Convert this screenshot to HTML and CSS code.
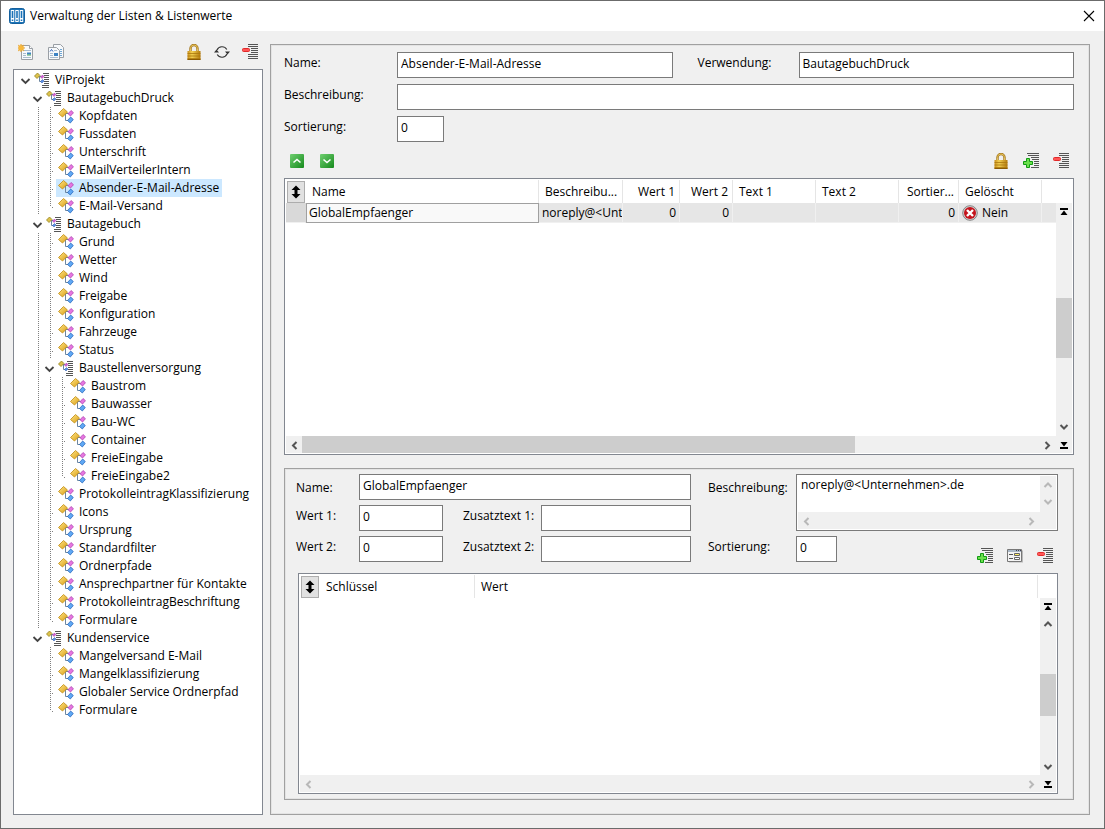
FILE: index.html
```html
<!DOCTYPE html>
<html lang="de">
<head>
<meta charset="utf-8">
<title>Verwaltung der Listen &amp; Listenwerte</title>
<link rel="stylesheet" href="styles.css">
</head>
<body>
<svg class="sprite" aria-hidden="true">
  <defs>
    <linearGradient id="gold" x1="0" y1="0" x2="1" y2="1"><stop offset="0" stop-color="#ffe78a"/><stop offset="1" stop-color="#d99c10"/></linearGradient>
    <linearGradient id="green" x1="0" y1="0" x2="1" y2="1"><stop offset="0" stop-color="#6fd070"/><stop offset="1" stop-color="#168a1c"/></linearGradient>
    <linearGradient id="brass" x1="0" y1="0" x2="1" y2="0"><stop offset="0" stop-color="#c98f1a"/><stop offset=".35" stop-color="#f2cf52"/><stop offset="1" stop-color="#b47a0c"/></linearGradient>
  </defs>
  <symbol id="leaf" viewBox="0 0 16 16">
    <path d="M7 5.500H11M7.500 5.500V12.500H10" fill="none" stroke="#6d86a0"/>
    <path d="M5.500 .5L9.500 4L4.500 9L.5 5.500Z" fill="url(#gold)" stroke="#c08a10" stroke-width=".8"/>
    <path d="M13 2.500L15.500 4.700L12.500 8L10 5.700Z" fill="#e676e0" stroke="#a838ac" stroke-width=".7"/>
    <path d="M12.700 9L15.300 11.500L12.300 15L9.500 12.500Z" fill="#5fa8f4" stroke="#1d5fb8" stroke-width=".7"/>
  </symbol>
  <symbol id="folder" viewBox="0 0 16 16">
    <path d="M9 1.500h6M10 3.500h5M10 5.500h5M10 7.500h5M10 9.500h5M10 11.500h5M8 13.500h7M8 15.500h7" stroke="#555"/>
    <path d="M4 4.500H7M5.500 5V9.500H7" fill="none" stroke="#6d86a0"/>
    <path d="M3.500 1L6 3.500L3 6.500L.5 4Z" fill="#dcc24a" stroke="#94821f" stroke-width=".8"/>
    <path d="M8.500 3L10 4.500L8 6.500L6.500 5Z" fill="#d65fd6" stroke="#993a9c" stroke-width=".5"/>
    <path d="M8.500 7.500L10 9L8 11L6.500 9.500Z" fill="#5a8fe4" stroke="#2b55a8" stroke-width=".5"/>
  </symbol>
  <symbol id="lock" viewBox="0 0 16 16">
    <path d="M4.500 8V4.500a3.500 3.500 0 0 1 7 0V8" fill="none" stroke="#a5771c" stroke-width="2.400"/>
    <path d="M4.500 8V4.500a3.500 3.500 0 0 1 7 0V8" fill="none" stroke="#e4c35c"/>
    <path d="M1.500 7h13v9h-13z" fill="url(#brass)"/>
    <path d="M1.500 9.500h13M1.500 12h13M1.500 14.500h13" stroke="#a9760d" stroke-width=".8"/>
    <path d="M1.500 15.500h13" stroke="#8a5a04"/>
  </symbol>
  <symbol id="minus" viewBox="0 0 16 16">
    <path d="M6 .5h10M6 2.500h10M8 4.500h8M8 6.500h8M8 8.500h8M6 10.500h10M6 12.500h10M6 14.500h10" stroke="#555" />
    <rect x="0" y="3" width="9" height="6" fill="#f0f0f0"/>
    <rect x=".5" y="4.500" width="7" height="3" rx="1" fill="#ff5555" stroke="#e02a2a"/>
  </symbol>
  <symbol id="plus" viewBox="0 0 16 16">
    <path d="M4 .5h12M5 2.500h11M8 4.500h8M9 6.500h7M11 8.500h5M11 10.500h5M11 12.500h5M8 14.500h8" stroke="#555"/>
    <path d="M3.500 5.500h3v3h3v3h-3v3h-3v-3h-3v-3h3z" fill="#6be04c" stroke="#119a12" stroke-linejoin="round"/>
  </symbol>
  <symbol id="refresh" viewBox="0 0 16 16">
    <path d="M3 6A5.500 5.500 0 0 1 12.800 5.500M13 10A5.500 5.500 0 0 1 3.200 10.500" fill="none" stroke="#333" stroke-width="1.100"/>
    <path d="M0 8.500L2.500 5.500L5 8.500ZM16 7.500L13.500 10.500L11 7.500Z" fill="#333"/>
  </symbol>
  <symbol id="newdoc" viewBox="0 0 16 16">
    <path d="M3.500 1.500h8l3 3v11h-11z" fill="#f7f9fb" stroke="#9a9fa5"/>
    <path d="M11.500 1.500v3h3" fill="#fff" stroke="#9a9fa5"/>
    <path d="M5 6.500h8M5 9.500h3M5 11.500h3M5 13.500h8" stroke="#a9bccd"/>
    <path d="M9 8.500h4v2H9z" fill="#3b82c4"/>
    <path d="M9 10.500h4v1H9z" fill="#45a35a"/>
    <path d="M3 0l1 2 2-1-1 2 2 1-2 .7L6 7 4 6 3 8 2 6 0 7l1-2-1-1 1-1-1-2 2 1z" fill="#f8b93c" stroke="#e59a1c" stroke-width=".4"/>
  </symbol>
  <symbol id="copydoc" viewBox="0 0 16 16">
    <path d="M5.500.5h7l3 3v10h-10z" fill="#f7f9fb" stroke="#9a9fa5"/>
    <path d="M12 5.500h2M12 7.500h2M12 9.500h2M12 11.500h2" stroke="#6fa6d4"/>
    <path d="M.5 3.500h8l3 3v9H.5z" fill="#f7f9fb" stroke="#9a9fa5"/>
    <path d="M2 9.500h3M2 11.500h3M2 13.500h8M6 6.500h3" stroke="#a9bccd"/>
    <path d="M6 9h4v3H6z" fill="#3b82c4"/>
    <path d="M2 7.500l1.500-2L5 7.500" fill="none" stroke="#3366bb"/>
  </symbol>
  <symbol id="form" viewBox="0 0 16 16">
    <path d="M2 2.500h14v12H2z" fill="#b9b9b9"/>
    <path d="M.5 1.500h14v12H.5z" fill="#f4f4f4" stroke="#777"/>
    <path d="M1 2h13v2H1z" fill="#a9b7c6"/>
    <path d="M9 2.500h1M11 2.500h1M13 2.500h1" stroke="#445"/>
    <path d="M2 6.500h4M2 10.500h4" stroke="#555"/>
    <path d="M7.500 5.500h5v2h-5z" fill="#ffee66" stroke="#666"/>
    <path d="M7.500 9.500h5v2h-5z" fill="#fff" stroke="#666"/>
  </symbol>
  <symbol id="up" viewBox="0 0 16 16">
    <rect x="1" y="1" width="14" height="14" rx="1" fill="url(#green)"/>
    <path d="M4.500 9.500L8 6.500L11.500 9.500" fill="none" stroke="#fff" stroke-width="1.600"/>
  </symbol>
  <symbol id="down" viewBox="0 0 16 16">
    <rect x="1" y="1" width="14" height="14" rx="1" fill="url(#green)"/>
    <path d="M4.500 6.500L8 9.500L11.500 6.500" fill="none" stroke="#fff" stroke-width="1.600"/>
  </symbol>
  <symbol id="cross" viewBox="0 0 16 16">
    <circle cx="8" cy="8" r="7.300" fill="#d4d4d4" stroke="#858585"/>
    <circle cx="8" cy="8" r="6" fill="#c4141c"/>
    <path d="M5 5L11 11M11 5L5 11" stroke="#fff" stroke-width="2.400"/>
  </symbol>
  <symbol id="sort" viewBox="0 0 16 16">
    <path d="M8 1.500L12.500 6H9.500V10H12.500L8 14.500L3.500 10H6.500V6H3.500Z" fill="#000"/>
  </symbol>
  <symbol id="first" viewBox="0 0 16 16"><path d="M4 4h8v2H4zM8 6.500L11.500 11h-7z" fill="#000"/></symbol>
  <symbol id="last" viewBox="0 0 16 16"><path d="M4 10h8v2H4zM8 9.500L4.500 5h7z" fill="#000"/></symbol>
  <symbol id="c-up" viewBox="0 0 16 16"><path d="M4.500 10L8 6.500L11.500 10" fill="none" stroke="currentColor" stroke-width="2"/></symbol>
  <symbol id="c-down" viewBox="0 0 16 16"><path d="M4.500 6L8 9.500L11.500 6" fill="none" stroke="currentColor" stroke-width="2"/></symbol>
  <symbol id="c-left" viewBox="0 0 16 16"><path d="M10.500 5L7 8.500L10.500 12" fill="none" stroke="currentColor" stroke-width="2"/></symbol>
  <symbol id="c-right" viewBox="0 0 16 16"><path d="M5.500 5L9 8.500L5.500 12" fill="none" stroke="currentColor" stroke-width="2"/></symbol>
  <symbol id="open" viewBox="0 0 13 16"><path d="M2.500 7L6.500 11L10.500 7" fill="none" stroke="currentColor" stroke-width="1.800"/></symbol>
</svg>

<div class="window">
  <header class="titlebar">
    <svg class="icon" viewBox="0 0 16 16" aria-hidden="true"><rect x=".5" y=".5" width="15" height="15" rx="2" fill="#1c74b8" stroke="#14609e"/><path d="M3.500 2v12M8 2v12M12.500 2v12" stroke="#fff" stroke-width="3.400"/><path d="M3.500 3v7M8 3v7M12.500 3v7" stroke="#1c74b8" stroke-width="1.600"/><path d="M3.500 11.500v1.500M8 11.500v1.500M12.500 11.500v1.500" stroke="#1c74b8" stroke-width="1.600"/></svg>
    <h1>Verwaltung der Listen &amp; Listenwerte</h1>
    <button class="close" aria-label="Schließen"><svg viewBox="0 0 12 12"><path d="M1 1L11 11M11 1L1 11" stroke="#000" stroke-width="1.100"/></svg></button>
  </header>

  <main class="content">
    <section class="sidebar">
      <div class="toolbar">
        <button class="tool" aria-label="Neu"><svg><use href="#newdoc"/></svg></button>
        <button class="tool" aria-label="Kopieren"><svg><use href="#copydoc"/></svg></button>
        <div class="tools-end tight">
          <button class="tool" aria-label="Sperren"><svg><use href="#lock"/></svg></button>
          <button class="tool" aria-label="Aktualisieren"><svg><use href="#refresh"/></svg></button>
          <button class="tool" aria-label="Löschen"><svg><use href="#minus"/></svg></button>
        </div>
      </div>
      <nav class="tree">
        <ul>
          <li>
            <div class="branch"><button class="toggle" aria-label="Zuklappen"><svg><use href="#open"/></svg></button><button class="node"><svg><use href="#folder"/></svg>ViProjekt</button></div>
            <ul>
              <li>
                <div class="branch"><button class="toggle" aria-label="Zuklappen"><svg><use href="#open"/></svg></button><button class="node"><svg><use href="#folder"/></svg>BautagebuchDruck</button></div>
                <ul>
                  <li class="leaf"><button class="node"><svg><use href="#leaf"/></svg>Kopfdaten</button></li>
                  <li class="leaf"><button class="node"><svg><use href="#leaf"/></svg>Fussdaten</button></li>
                  <li class="leaf"><button class="node"><svg><use href="#leaf"/></svg>Unterschrift</button></li>
                  <li class="leaf"><button class="node"><svg><use href="#leaf"/></svg>EMailVerteilerIntern</button></li>
                  <li class="leaf"><button class="node selected"><svg><use href="#leaf"/></svg>Absender-E-Mail-Adresse</button></li>
                  <li class="leaf"><button class="node"><svg><use href="#leaf"/></svg>E-Mail-Versand</button></li>
                </ul>
              </li>
              <li>
                <div class="branch"><button class="toggle" aria-label="Zuklappen"><svg><use href="#open"/></svg></button><button class="node"><svg><use href="#folder"/></svg>Bautagebuch</button></div>
                <ul>
                  <li class="leaf"><button class="node"><svg><use href="#leaf"/></svg>Grund</button></li>
                  <li class="leaf"><button class="node"><svg><use href="#leaf"/></svg>Wetter</button></li>
                  <li class="leaf"><button class="node"><svg><use href="#leaf"/></svg>Wind</button></li>
                  <li class="leaf"><button class="node"><svg><use href="#leaf"/></svg>Freigabe</button></li>
                  <li class="leaf"><button class="node"><svg><use href="#leaf"/></svg>Konfiguration</button></li>
                  <li class="leaf"><button class="node"><svg><use href="#leaf"/></svg>Fahrzeuge</button></li>
                  <li class="leaf"><button class="node"><svg><use href="#leaf"/></svg>Status</button></li>
                  <li>
                    <div class="branch"><button class="toggle" aria-label="Zuklappen"><svg><use href="#open"/></svg></button><button class="node"><svg><use href="#folder"/></svg>Baustellenversorgung</button></div>
                    <ul>
                      <li class="leaf"><button class="node"><svg><use href="#leaf"/></svg>Baustrom</button></li>
                      <li class="leaf"><button class="node"><svg><use href="#leaf"/></svg>Bauwasser</button></li>
                      <li class="leaf"><button class="node"><svg><use href="#leaf"/></svg>Bau-WC</button></li>
                      <li class="leaf"><button class="node"><svg><use href="#leaf"/></svg>Container</button></li>
                      <li class="leaf"><button class="node"><svg><use href="#leaf"/></svg>FreieEingabe</button></li>
                      <li class="leaf"><button class="node"><svg><use href="#leaf"/></svg>FreieEingabe2</button></li>
                    </ul>
                  </li>
                  <li class="leaf"><button class="node"><svg><use href="#leaf"/></svg>ProtokolleintragKlassifizierung</button></li>
                  <li class="leaf"><button class="node"><svg><use href="#leaf"/></svg>Icons</button></li>
                  <li class="leaf"><button class="node"><svg><use href="#leaf"/></svg>Ursprung</button></li>
                  <li class="leaf"><button class="node"><svg><use href="#leaf"/></svg>Standardfilter</button></li>
                  <li class="leaf"><button class="node"><svg><use href="#leaf"/></svg>Ordnerpfade</button></li>
                  <li class="leaf"><button class="node"><svg><use href="#leaf"/></svg>Ansprechpartner für Kontakte</button></li>
                  <li class="leaf"><button class="node"><svg><use href="#leaf"/></svg>ProtokolleintragBeschriftung</button></li>
                  <li class="leaf"><button class="node"><svg><use href="#leaf"/></svg>Formulare</button></li>
                </ul>
              </li>
              <li>
                <div class="branch"><button class="toggle" aria-label="Zuklappen"><svg><use href="#open"/></svg></button><button class="node"><svg><use href="#folder"/></svg>Kundenservice</button></div>
                <ul>
                  <li class="leaf"><button class="node"><svg><use href="#leaf"/></svg>Mangelversand E-Mail</button></li>
                  <li class="leaf"><button class="node"><svg><use href="#leaf"/></svg>Mangelklassifizierung</button></li>
                  <li class="leaf"><button class="node"><svg><use href="#leaf"/></svg>Globaler Service Ordnerpfad</button></li>
                  <li class="leaf"><button class="node"><svg><use href="#leaf"/></svg>Formulare</button></li>
                </ul>
              </li>
            </ul>
          </li>
        </ul>
      </nav>
    </section>

    <section class="group details">
      <form class="list-form">
        <label for="l-name">Name:</label>
        <input id="l-name" value="Absender-E-Mail-Adresse">
        <label class="second" for="l-use">Verwendung:</label>
        <input id="l-use" value="BautagebuchDruck">
        <label for="l-desc">Beschreibung:</label>
        <input id="l-desc" class="wide">
        <label for="l-sort">Sortierung:</label>
        <input id="l-sort" class="short" value="0">
      </form>

      <div class="toolbar">
        <button class="tool" aria-label="Nach oben"><svg><use href="#up"/></svg></button>
        <button class="tool" aria-label="Nach unten"><svg><use href="#down"/></svg></button>
        <div class="tools-end">
          <button class="tool" aria-label="Sperren"><svg><use href="#lock"/></svg></button>
          <button class="tool" aria-label="Hinzufügen"><svg><use href="#plus"/></svg></button>
          <button class="tool" aria-label="Löschen"><svg><use href="#minus"/></svg></button>
        </div>
      </div>

      <div class="grid values">
        <table>
          <colgroup><col class="w-sort"><col class="w-name"><col class="w-desc"><col class="w-v1"><col class="w-v2"><col class="w-text"><col class="w-text"><col class="w-order"><col class="w-text"><col></colgroup>
          <thead>
            <tr><th class="corner"><button class="sort" aria-label="Sortieren"><svg><use href="#sort"/></svg></button></th><th>Name</th><th>Beschreibu...</th><th class="num">Wert 1</th><th class="num">Wert 2</th><th>Text 1</th><th>Text 2</th><th class="num">Sortier...</th><th>Gelöscht</th><th></th></tr>
          </thead>
          <tbody>
            <tr><td class="mark"></td><td class="focus">GlobalEmpfaenger</td><td>noreply@&lt;Unt</td><td class="num">0</td><td class="num">0</td><td></td><td></td><td class="num">0</td><td><span class="flag"><svg><use href="#cross"/></svg>Nein</span></td><td></td></tr>
          </tbody>
        </table>
        <div class="vbar">
          <button aria-label="Erste Zeile"><svg><use href="#first"/></svg></button>
          <i class="before"></i><i class="thumb"></i><i class="after"></i>
          <button aria-label="Abwärts"><svg><use href="#c-down"/></svg></button>
        </div>
        <div class="hbar">
          <button aria-label="Links"><svg><use href="#c-left"/></svg></button>
          <i class="thumb"></i><i class="after"></i>
          <button aria-label="Rechts"><svg><use href="#c-right"/></svg></button>
        </div>
        <button class="end" aria-label="Letzte Zeile"><svg><use href="#last"/></svg></button>
      </div>

      <section class="group value">
        <form class="value-form">
          <div class="fields-left">
            <label class="top" for="v-name">Name:</label>
            <input id="v-name" class="wide" value="GlobalEmpfaenger">
            <label for="v-w1">Wert 1:</label>
            <input id="v-w1" value="0">
            <label class="extra" for="v-z1">Zusatztext 1:</label>
            <input id="v-z1">
            <label for="v-w2">Wert 2:</label>
            <input id="v-w2" value="0">
            <label class="extra" for="v-z2">Zusatztext 2:</label>
            <input id="v-z2">
          </div>
          <div class="fields-right">
            <label class="top" for="v-desc">Beschreibung:</label>
            <div class="memo">
              <textarea id="v-desc" wrap="off">noreply@&lt;Unternehmen&gt;.de</textarea>
              <div class="vbar off"><button type="button" aria-label="Aufwärts"><svg><use href="#c-up"/></svg></button><button type="button" aria-label="Abwärts"><svg><use href="#c-down"/></svg></button></div>
              <div class="hbar off"><button type="button" aria-label="Links"><svg><use href="#c-left"/></svg></button><i class="after"></i><button type="button" aria-label="Rechts"><svg><use href="#c-right"/></svg></button></div>
              <i class="end"></i>
            </div>
            <label for="v-sort">Sortierung:</label>
            <div class="sort-line">
              <input id="v-sort" value="0">
              <div class="tools-end">
                <button type="button" class="tool" aria-label="Hinzufügen"><svg><use href="#plus"/></svg></button>
                <button type="button" class="tool" aria-label="Bearbeiten"><svg><use href="#form"/></svg></button>
                <button type="button" class="tool" aria-label="Löschen"><svg><use href="#minus"/></svg></button>
              </div>
            </div>
          </div>
        </form>
        <div class="grid keys">
          <table>
            <colgroup><col class="w-sort"><col class="w-key"><col><col class="w-rest"></colgroup>
            <thead>
              <tr><th class="corner"><button class="sort" aria-label="Sortieren"><svg><use href="#sort"/></svg></button></th><th>Schlüssel</th><th>Wert</th><th></th></tr>
            </thead>
          </table>
          <div class="vbar">
            <button aria-label="Erste Zeile"><svg><use href="#first"/></svg></button>
            <button aria-label="Aufwärts"><svg><use href="#c-up"/></svg></button>
            <i class="before"></i><i class="thumb"></i><i class="after"></i>
            <button aria-label="Abwärts"><svg><use href="#c-down"/></svg></button>
          </div>
          <div class="hbar off">
            <button aria-label="Links"><svg><use href="#c-left"/></svg></button>
            <i class="after"></i>
            <button aria-label="Rechts"><svg><use href="#c-right"/></svg></button>
          </div>
          <button class="end" aria-label="Letzte Zeile"><svg><use href="#last"/></svg></button>
        </div>
      </section>
    </section>
  </main>
</div>
</body>
</html>
```

FILE: styles.css
```css
* { box-sizing: border-box; }

body {
  margin: 0;
  font: 12px/18px "Open Sans", "Noto Sans", sans-serif;
  color: #000;
  background: #f0f0f0;
}

button, input, textarea { font: inherit; color: inherit; }
button { padding: 0; border: 0; background: none; }
svg { display: block; flex: none; width: 16px; height: 16px; }
ul { list-style: none; margin: 0; padding: 0; }
.sprite { position: absolute; width: 0; height: 0; }

.window {
  display: flex;
  flex-direction: column;
  min-height: 100vh;
  border: 1px solid #6b6b6b;
}

.titlebar {
  display: flex;
  align-items: center;
  height: 30px;
  padding: 0 8px;
  background: #fff;
}
.titlebar h1 { flex: 1; margin: 0 0 0 5px; font-size: 12px; font-weight: 400; }
.close { display: grid; place-items: center; width: 14px; height: 28px; }
.close svg { width: 12px; height: 12px; }

.content {
  flex: 1;
  display: grid;
  grid-template-columns: 250px 1fr;
  gap: 7px;
  padding: 0 14px 13px 12px;
}

.toolbar { display: flex; align-items: center; gap: 4px; height: 36px; padding-top: 2px; }
.tools-end { display: flex; gap: 4px; margin-left: auto; }
.tools-end.tight { gap: 2px; }
.tool { display: grid; place-items: center; width: 26px; height: 34px; }

/* list tree */
.sidebar { display: flex; flex-direction: column; padding-top: 2px; }
.tree {
  flex: 1;
  padding: 1px 0 0 5px;
  border: 1px solid #828790;
  background: #fff;
}
.tree ul ul { margin-left: 12px; }
.tree ul ul > li {
  background: repeating-linear-gradient(#808080 0 1px, transparent 1px 2px) 7px 0 / 1px 100% no-repeat;
}
.tree ul ul > li:last-child { background-size: 1px 10px; }
.branch, .leaf { display: flex; height: 18px; }
.leaf::before {
  content: "";
  width: 13px;
  background: linear-gradient(#808080, #808080) 9px 10px / 1px 1px no-repeat;
}
.toggle { display: grid; place-items: center; width: 13px; background: #fff; color: #444; }
.toggle svg { width: 13px; }
.node {
  display: flex;
  align-items: center;
  gap: 5px;
  padding: 0 3px 0 2px;
  white-space: nowrap;
}
.node.selected { background: #cce8ff; }

/* framed groups and fields */
.group {
  display: flex;
  flex-direction: column;
  border: 1px solid #a0a0a0;
  box-shadow: inset 0 0 0 1px #e3e3e3;
}
.details { margin-top: 13px; padding: 7px 15px 14px 13px; }

label { line-height: 22px; white-space: nowrap; }
label.top { line-height: 28px; }
input, textarea {
  width: 100%;
  min-width: 0;
  height: 26px;
  margin: 0;
  padding: 0 3px 3px;
  border: 1px solid #7a7a7a;
  background: #fff;
}
.list-form {
  display: grid;
  grid-template-columns: 113px 1fr 126px 1fr;
  row-gap: 6px;
}
.second { padding-left: 25px; }
.wide { grid-column: 2 / -1; }
.short { width: 47px; }

/* data grids */
.grid {
  display: grid;
  grid-template-columns: 1fr 16px;
  grid-template-rows: 23px 1fr 17px;
  padding: 1px;
  border: 1px solid #828790;
  background: #fff;
}
.grid table {
  grid-area: 1 / 1 / 3 / 3;
  align-self: start;
  width: 100%;
  table-layout: fixed;
  border-collapse: separate;
  border-spacing: 0;
}
.w-sort { width: 20px; }
.w-name { width: 233px; }
.w-desc { width: 84px; }
.w-v1 { width: 57px; }
.w-v2 { width: 53px; }
.w-text { width: 83px; }
.w-order { width: 60px; }
.w-key { width: 155px; }
.w-rest { width: 18px; }

th, td { overflow: hidden; white-space: nowrap; text-align: left; border-right: 1px solid #e5e5e5; }
th { height: 23px; padding: 0 4px 0 6px; font-weight: 400; }
th:last-child, td:last-child { border-right: 0; }
th.corner { padding: 0 1px; border: 0; }
.sort { display: grid; place-items: center; width: 18px; height: 22px; border: 1px solid #adadad; background: #e1e1e1; }
td { height: 20px; padding: 0 3px; background: #e6e6e6; border-color: #f0f0f0; border-bottom: 1px solid #f0f0f0; }
.num { text-align: right; }
td.mark { background: #d9d9d9; border-right-color: #d9d9d9; }
td.focus { padding: 0 2px; border: 1px solid #a0a0a0; background: #f9f9f9; }
.flag { display: flex; align-items: center; gap: 4px; }

.vbar {
  grid-area: 2 / 2;
  display: flex;
  flex-direction: column;
  background: #f0f0f0;
  color: #555;
}
.hbar { grid-area: 3 / 1; display: flex; background: #f0f0f0; color: #555; }
.off { color: #b8b8b8; }
.vbar button, .hbar button, .end { display: grid; place-items: center; min-width: 16px; height: 17px; }
.end { grid-area: 3 / 2; background: #f0f0f0; }
.thumb { background: #cdcdcd; }
.after { flex: 1; }

.values { flex: 273 1 0; }
.values .before { flex: 78; }
.values .vbar .thumb { flex: 61; }
.values .vbar .after { flex: 61; }
.values .hbar .thumb { flex: 551; }
.values .hbar .after { flex: 185; }

.value { flex: 320 1 0; margin-top: 13px; padding: 5px 15px 5px 11px; }
.value-form { display: grid; grid-template-columns: 395fr 350fr; gap: 17px; }
.fields-left, .fields-right { display: grid; align-content: start; row-gap: 5px; }
.fields-left { grid-template-columns: 63px 84px 98px 1fr; grid-template-rows: 26px 26px 26px; }
.extra { padding-left: 20px; }
.fields-right { grid-template-columns: 88px 1fr; grid-template-rows: 57px 37px; }
.sort-line { display: flex; align-items: flex-start; }
.sort-line input { width: 41px; }
.sort-line .tools-end { align-self: flex-end; }

.memo {
  display: grid;
  grid-template-columns: 1fr 16px;
  grid-template-rows: 1fr 17px;
  padding: 1px;
  border: 1px solid #7a7a7a;
  background: #fff;
}
.memo textarea { height: 100%; border: 0; resize: none; overflow: hidden; }
.memo .vbar { grid-area: 1 / 2; }
.memo .hbar { grid-area: 2 / 1; }
.memo .end { grid-area: 2 / 2; }

.keys { flex: 1; margin-left: 2px; }
.keys .before { flex: 42; }
.keys .thumb { flex: 42; }
.keys .after { flex: 42; }
```
